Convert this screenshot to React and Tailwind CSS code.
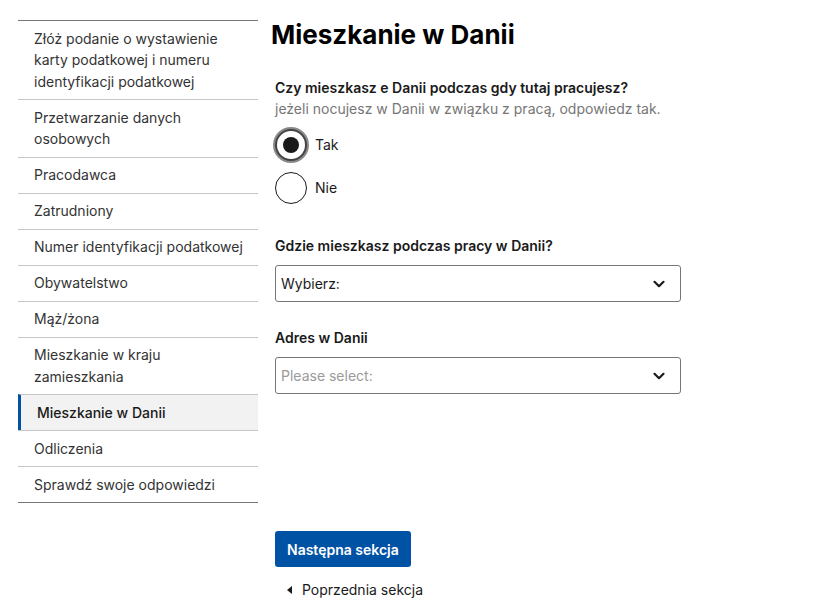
import { useState } from 'react';

const steps = [
  'Złóż podanie o wystawienie karty podatkowej i numeru identyfikacji podatkowej',
  'Przetwarzanie danych osobowych',
  'Pracodawca',
  'Zatrudniony',
  'Numer identyfikacji podatkowej',
  'Obywatelstwo',
  'Mąż/żona',
  'Mieszkanie w kraju zamieszkania',
  'Mieszkanie w Danii',
  'Odliczenia',
  'Sprawdź swoje odpowiedzi',
];

const font = { fontFamily: 'Inter, Roboto, "Noto Sans", sans-serif' };

function Chevron() {
  return (
    <svg width="14" height="14" viewBox="0 0 14 14" fill="none" className="shrink-0">
      <path d="M2.5 4.8 7 9.2l4.5-4.4" stroke="#1a1a1a" strokeWidth="2.2" strokeLinecap="round" strokeLinejoin="round" />
    </svg>
  );
}

function Radio({ label, checked, onClick }) {
  return (
    <button type="button" onClick={onClick} className="flex items-center gap-2 h-[43px] text-left">
      <span
        className={
          checked
            ? 'w-8 h-8 rounded-full border-2 border-[#444] shadow-[0_0_0_2px_#8a8a8a] bg-white flex items-center justify-center'
            : 'w-8 h-8 rounded-full border border-[#1a1a1a] bg-white flex items-center justify-center'
        }
      >
        {checked && <span className="w-4 h-4 rounded-full bg-[#1a1a1a]" />}
      </span>
      <span className="text-[14px] text-[#1a1a1a]">{label}</span>
    </button>
  );
}

function Select({ placeholder, muted }) {
  return (
    <div className="w-[406px] h-[37px] border border-[#767676] rounded-[3px] flex items-center justify-between pl-[5px] pr-[14px] bg-white">
      <span className={muted ? 'text-[14px] text-[#9a9a9a]' : 'text-[14px] text-[#1a1a1a]'}>{placeholder}</span>
      <Chevron />
    </div>
  );
}

export default function App() {
  const [lives, setLives] = useState('tak');
  const current = 'Mieszkanie w Danii';

  return (
    <div className="min-h-[615px] bg-white flex gap-[13px] pl-[18px] pt-[20px]" style={font}>
      {/* step navigation */}
      <nav className="w-[240px] shrink-0 self-start border-t border-b border-[#767676]">
        {steps.map((s, i) => {
          const active = s === current;
          return (
            <div
              key={s}
              className={
                (i > 0 ? 'border-t border-[#c6c6c6] ' : '') +
                (active
                  ? 'bg-[#f2f2f2] border-l-[3px] border-l-[#0052a5] pl-[16px] pr-[14px] py-[6.75px] text-[14px] leading-[21.5px] font-medium text-[#1a1a1a]'
                  : 'pl-[16px] pr-[14px] py-[6.75px] text-[14px] leading-[21.5px] text-[#333]')
              }
            >
              {s}
            </div>
          );
        })}
      </nav>

      {/* form */}
      <main className="flex flex-col">
        <h1 className="text-[26px] leading-[32px] font-bold text-black -mt-[1px]">Mieszkanie w Danii</h1>

        <div className="pl-[4px] mt-[26px]">
          <p className="text-[14px] leading-[21px] font-semibold text-[#1a1a1a]">
            Czy mieszkasz e Danii podczas gdy tutaj pracujesz?
          </p>
          <p className="text-[14px] leading-[21px] text-[#767676]">
            jeżeli nocujesz w Danii w związku z pracą, odpowiedz tak.
          </p>

          <div className="flex flex-col mt-[4px]">
            <Radio label="Tak" checked={lives === 'tak'} onClick={() => setLives('tak')} />
            <Radio label="Nie" checked={lives === 'nie'} onClick={() => setLives('nie')} />
          </div>

          <p className="text-[14px] leading-[21px] font-semibold text-[#1a1a1a] mt-[26px]">
            Gdzie mieszkasz podczas pracy w Danii?
          </p>
          <div className="mt-[9px]">
            <Select placeholder="Wybierz:" />
          </div>

          <p className="text-[14px] leading-[21px] font-semibold text-[#1a1a1a] mt-[25px]">Adres w Danii</p>
          <div className="mt-[9px]">
            <Select placeholder="Please select:" muted />
          </div>

          <button
            type="button"
            className="mt-[137px] h-[36px] px-[12px] rounded-[3px] bg-[#0052a5] text-white text-[14px] font-semibold"
          >
            Następna sekcja
          </button>

          <a href="#" className="flex items-center gap-[9px] mt-[12px] pl-[12px] text-[14px] text-[#1a1a1a]">
            <svg width="6" height="8" viewBox="0 0 6 8">
              <path d="M5 0v8L0 4z" fill="#1a1a1a" />
            </svg>
            Poprzednia sekcja
          </a>
        </div>
      </main>
    </div>
  );
}
